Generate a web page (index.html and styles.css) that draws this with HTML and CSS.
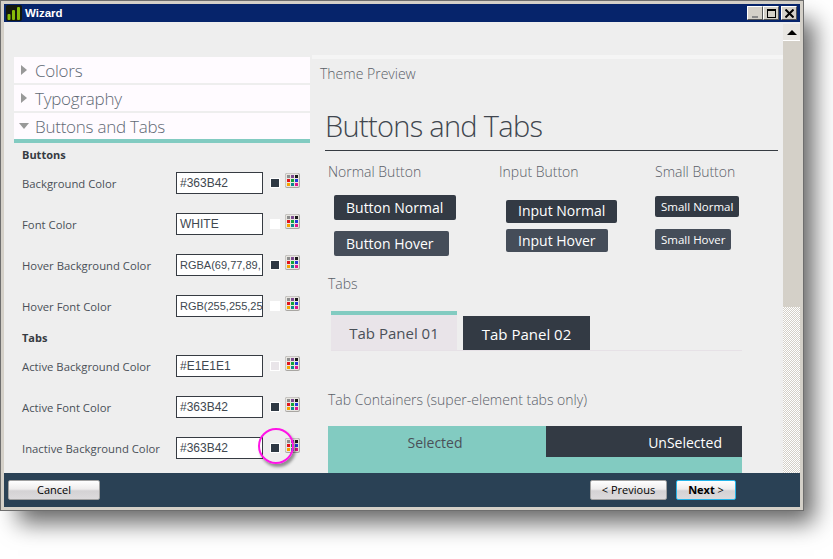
FILE: index.html
```html
<!DOCTYPE html>
<html lang="en">
<head>
  <meta charset="UTF-8" />
  <title>Wizard</title>
  <link rel="stylesheet" href="styles.css">
</head>
<body>
  <svg class="defs" width="0" height="0">
    <symbol id="palette" viewBox="0 0 15 15">
      <rect x="0" y="0" width="15" height="15" rx="2" fill="#a8a6a2"/>
      <rect x="0.5" y="0.5" width="13.5" height="13.5" rx="1.5" fill="#e8e6e1"/>
      <rect x="2" y="2" width="3" height="3" fill="#8e8e8e"/><rect x="6" y="2" width="3" height="3" fill="#7b4a8e"/><rect x="10" y="2" width="3" height="3" fill="#1a1a1a"/>
      <rect x="2" y="6" width="3" height="3" fill="#e2141c"/><rect x="6" y="6" width="3" height="3" fill="#12a538"/><rect x="10" y="6" width="3" height="3" fill="#2438d8"/>
      <rect x="2" y="10" width="3" height="3" fill="#f5a400"/><rect x="6" y="10" width="3" height="3" fill="#0d8a8a"/><rect x="10" y="10" width="3" height="3" fill="#e0148c"/>
    </symbol>
  </svg>

  <div class="window">
    <div class="title-bar">
      <svg class="app-icon" width="16" height="16" viewBox="0 0 16 16">
        <rect width="16" height="16" rx="2" fill="#14180c"/>
        <rect x="1.5" y="9" width="3" height="6" rx="1" fill="#86bc0a"/>
        <rect x="6" y="5" width="3" height="10" rx="1" fill="#86bc0a"/>
        <rect x="11" y="2" width="3" height="13" rx="1" fill="#86bc0a"/>
      </svg>
      <span class="title-text">Wizard</span>
      <div class="win-buttons">
        <div class="win-btn"><span class="win-min"></span></div>
        <div class="win-btn"><span class="win-max"></span></div>
        <div class="win-btn win-close">
          <svg width="9" height="9" viewBox="0 0 9 9"><path d="M0.5 0.5 L8.5 8.5 M8.5 0.5 L0.5 8.5" stroke="#000" stroke-width="2"/></svg>
        </div>
      </div>
    </div>

    <div class="main">
      <div class="left-panel">
        <div class="acc-item"><span class="arrow-right"></span><span class="acc-text">Colors</span></div>
        <div class="acc-item"><span class="arrow-right"></span><span class="acc-text">Typography</span></div>
        <div class="acc-item acc-open"><span class="arrow-down"></span><span class="acc-text">Buttons and Tabs</span></div>

        <div class="group-title">Buttons</div>
        <div class="color-row">
          <label>Background Color</label>
          <div class="color-input">#363B42</div>
          <span class="swatch swatch-dark"></span>
          <svg class="palette"><use href="#palette"/></svg>
        </div>
        <div class="color-row">
          <label>Font Color</label>
          <div class="color-input">WHITE</div>
          <span class="swatch swatch-white"></span>
          <svg class="palette"><use href="#palette"/></svg>
        </div>
        <div class="color-row">
          <label>Hover Background Color</label>
          <div class="color-input color-input-long">RGBA(69,77,89,</div>
          <span class="swatch swatch-dark"></span>
          <svg class="palette"><use href="#palette"/></svg>
        </div>
        <div class="color-row">
          <label>Hover Font Color</label>
          <div class="color-input color-input-long">RGB(255,255,25</div>
          <span class="swatch swatch-white"></span>
          <svg class="palette"><use href="#palette"/></svg>
        </div>

        <div class="group-title group-tabs">Tabs</div>
        <div class="color-row">
          <label>Active Background Color</label>
          <div class="color-input">#E1E1E1</div>
          <span class="swatch swatch-light"></span>
          <svg class="palette"><use href="#palette"/></svg>
        </div>
        <div class="color-row">
          <label>Active Font Color</label>
          <div class="color-input">#363B42</div>
          <span class="swatch swatch-dark"></span>
          <svg class="palette"><use href="#palette"/></svg>
        </div>
        <div class="color-row">
          <label>Inactive Background Color</label>
          <div class="color-input">#363B42</div>
          <span class="swatch swatch-dark"></span>
          <svg class="palette"><use href="#palette"/></svg>
          <span class="highlight"></span>
        </div>
      </div>

      <div class="preview">
        <div class="preview-label">Theme Preview</div>
        <h1 class="preview-title">Buttons and Tabs</h1>

        <div class="button-columns">
          <div class="col col-normal">
            <div class="col-title">Normal Button</div>
            <div class="btn btn-big">Button Normal</div>
            <div class="btn btn-big btn-hover btn-second">Button Hover</div>
          </div>
          <div class="col col-input">
            <div class="col-title">Input Button</div>
            <div class="btn btn-mid">Input Normal</div>
            <div class="btn btn-mid btn-hover btn-second-mid">Input Hover</div>
          </div>
          <div class="col col-small">
            <div class="col-title">Small Button</div>
            <div class="btn btn-small">Small Normal</div>
            <div class="btn btn-small btn-hover btn-second-small">Small Hover</div>
          </div>
        </div>

        <div class="col-title tabs-title">Tabs</div>
        <div class="tab-strip">
          <div class="tab tab-active">Tab Panel 01</div>
          <div class="tab tab-inactive">Tab Panel 02</div>
        </div>

        <div class="col-title containers-title">Tab Containers (super-element tabs only)</div>
        <div class="tab-container">
          <div class="tc-tabs">
            <div class="tc-selected">Selected</div>
            <div class="tc-unselected">UnSelected</div>
          </div>
        </div>
      </div>

      <div class="scrollbar">
        <div class="scroll-up"><span class="scroll-arrow"></span></div>
        <div class="scroll-thumb"></div>
        <div class="scroll-track"></div>
      </div>
    </div>

    <div class="footer">
      <div class="dlg-btn btn-cancel">Cancel</div>
      <div class="footer-right">
        <div class="dlg-btn btn-prev">&lt; Previous</div>
        <div class="dlg-btn btn-next"><b>Next</b> &gt;</div>
      </div>
    </div>
  </div>
</body>
</html>
```

FILE: styles.css
```css
body {
  margin: 0;
  width: 833px;
  height: 559px;
  background: #ffffff;
  overflow: hidden;
  font-family: "Open Sans", "Noto Sans", sans-serif;
}

.defs {
  display: block;
  height: 0;
}

.window {
  width: 796px;
  height: 503px;
  box-sizing: content-box;
  border: 4px solid #d4d0c8;
  outline: 1px solid #6e6e6e;
  outline-offset: -1px;
  box-shadow: 14px 16px 22px -4px rgba(0, 0, 0, 0.6);
  display: flex;
  flex-direction: column;
  background: #eeeeee;
}

.title-bar {
  height: 18px;
  background: #06246b;
  display: flex;
  align-items: center;
  padding: 0 3px 0 2px;
  flex: none;
}

.app-icon {
  flex: none;
}

.title-text {
  color: #ffffff;
  font: bold 11.5px "Liberation Sans", sans-serif;
  margin-left: 3px;
  flex: 1;
}

.win-buttons {
  display: flex;
}

.win-btn {
  width: 14px;
  height: 12px;
  background: #d4d0c8;
  border: 1px solid;
  border-color: #ffffff #555555 #555555 #ffffff;
  display: flex;
  align-items: center;
  justify-content: center;
}

.win-close {
  margin-left: 2px;
}

.win-min {
  width: 6px;
  height: 2px;
  background: #8a8a8a;
  margin-top: 7px;
}

.win-max {
  width: 7px;
  height: 6px;
  border: 1px solid #000;
  border-top-width: 2px;
}

.main {
  flex: 1;
  display: flex;
  min-height: 0;
}

.left-panel {
  width: 296px;
  padding: 35px 0 0 10px;
  flex: none;
  overflow: hidden;
}

.acc-item {
  height: 26px;
  margin-bottom: 2px;
  background: #fffbff;
  color: #5f6a75;
  font-size: 17px;
  font-weight: 300;
  letter-spacing: -0.25px;
  display: flex;
  align-items: center;
  padding-left: 7px;
}

.acc-text {
  margin-top: 1px;
}

.acc-open {
  border-bottom: 4px solid #82cbc1;
  margin-bottom: 0;
}

.arrow-right {
  width: 0;
  height: 0;
  border-left: 6px solid #999999;
  border-top: 5px solid transparent;
  border-bottom: 5px solid transparent;
  margin-right: 8px;
}

.arrow-down {
  width: 0;
  height: 0;
  border-top: 6px solid #999999;
  border-left: 5px solid transparent;
  border-right: 5px solid transparent;
  margin: 0 6px 0 -2px;
}

.group-title {
  font-size: 11px;
  font-weight: 700;
  color: #363b42;
  padding: 4px 0 0 8px;
  height: 18px;
}

.group-tabs {
  height: 14px;
  margin-top: -9px;
  margin-bottom: 10px;
  padding-top: 4px;
}

.color-row {
  position: relative;
  display: flex;
  align-items: center;
  height: 24px;
  margin: 6px 0 17px 8px;
  font-size: 11.3px;
  color: #4a5058;
}

.color-row:last-child {
  margin-bottom: 0;
}

.color-row label {
  width: 154px;
  flex: none;
  padding-top: 1px;
  white-space: nowrap;
}

.color-input {
  width: 82px;
  height: 20px;
  border: 1px solid #363b42;
  background: #ffffff;
  flex: none;
  font: 12px/20px "Liberation Sans", sans-serif;
  color: #404850;
  padding-left: 3px;
  overflow: hidden;
  white-space: nowrap;
}

.color-input-long {
  font-size: 11px;
}

.swatch {
  width: 8px;
  height: 8px;
  border: 1px solid #ffffff;
  margin: 0 5px 0 7px;
  flex: none;
}

.swatch-dark { background: #2f3944; }
.swatch-white { background: #ffffff; }
.swatch-light { background: #e9e5e9; }

.palette {
  width: 15px;
  height: 15px;
  flex: none;
  margin-top: -5px;
}

.highlight {
  position: absolute;
  left: 236px;
  top: -8px;
  width: 32px;
  height: 32px;
  border: 2px solid #ff14e6;
  border-radius: 50%;
  box-shadow: 2px 3px 3px rgba(0, 0, 0, 0.4);
}

.preview {
  flex: 1;
  min-width: 0;
  margin: 33px 0 0 2px;
  border-top: 4px solid #f5f5f5;
  padding-left: 8px;
  overflow: hidden;
}

.preview-label {
  font-size: 14px;
  font-weight: 300;
  color: #5a6068;
  margin-top: 6px;
  line-height: 18px;
}

.preview-title {
  font-size: 29px;
  font-weight: 300;
  letter-spacing: -0.7px;
  color: #40464e;
  margin: 23px 5px 0 5px;
  line-height: 39px;
  height: 39px;
  padding-bottom: 5px;
  border-bottom: 1px solid #363b42;
}

.button-columns {
  display: flex;
  margin-top: 11px;
  padding-left: 8px;
  height: 110px;
}

.col-normal { width: 171px; }
.col-input { width: 156px; }

.col-title {
  font-size: 14px;
  font-weight: 300;
  color: #5a6068;
  line-height: 20px;
}

.btn {
  display: table;
  background: #333a44;
  color: #ffffff;
  border-radius: 2px;
  font-size: 14px;
}

.btn-hover { background: #454d59; }

.btn-big {
  margin: 13px 0 0 6px;
  height: 25px;
  line-height: 25px;
  padding: 0 13px 0 12px;
}

.btn-big.btn-second {
  margin-top: 11px;
  padding-right: 15px;
}

.btn-mid {
  margin: 18px 0 0 7px;
  height: 23px;
  line-height: 22px;
  padding: 0 12px;
}

.btn-mid.btn-second-mid {
  margin-top: 6px;
  line-height: 23px;
}

.btn-small {
  margin-top: 14px;
  height: 21px;
  line-height: 21px;
  padding: 0 6px;
  font-size: 11.5px;
}

.btn-small.btn-second-small { margin-top: 12px; }

.tabs-title {
  margin: 2px 0 0 8px;
}

.tab-strip {
  display: flex;
  align-items: flex-end;
  margin: 17px 41px 0 11px;
  border-bottom: 1px solid #e6e1e6;
  height: 39px;
}

.tab {
  font-size: 15px;
  text-align: center;
}

.tab-active {
  width: 126px;
  height: 35px;
  line-height: 37px;
  background: #e9e4e9;
  border-top: 4px solid #82cbc1;
  color: #4a5058;
}

.tab-inactive {
  width: 127px;
  height: 34px;
  line-height: 36px;
  margin-left: 6px;
  background: #333a44;
  color: #ffffff;
}

.containers-title {
  margin: 39px 0 0 8px;
}

.tab-container {
  margin: 16px 41px 0 8px;
  background: #82cbc1;
  height: 47px;
}

.tc-tabs {
  display: flex;
  height: 31px;
  line-height: 33px;
  font-size: 14px;
}

.tc-selected {
  width: 218px;
  text-align: center;
  color: #4a5058;
  padding-right: 4px;
  box-sizing: border-box;
}

.tc-unselected {
  flex: 1;
  background: #333a44;
  color: #ffffff;
  text-align: right;
  padding-right: 20px;
}

.scrollbar {
  width: 17px;
  flex: none;
  display: flex;
  flex-direction: column;
  margin-top: 2px;
}

.scroll-up {
  height: 16px;
  background: #e8e6e2;
  border-bottom: 1px solid #ffffff;
  display: flex;
  align-items: center;
  justify-content: center;
}

.scroll-arrow {
  width: 0;
  height: 0;
  border-bottom: 5px solid #000;
  border-left: 5px solid transparent;
  border-right: 5px solid transparent;
}

.scroll-thumb {
  height: 266px;
  background: #d4d0c8;
}

.scroll-track {
  flex: 1;
  background: repeating-conic-gradient(#d4d0c8 0 25%, #ffffff 0 50%) 0 0 / 2px 2px;
}

.footer {
  height: 34px;
  flex: none;
  background: #2a4155;
  display: flex;
  align-items: center;
  justify-content: space-between;
  padding: 0 64px 0 4px;
}

.footer-right {
  display: flex;
  gap: 9px;
}

.dlg-btn {
  height: 18px;
  border: 1px solid #a0a0a0;
  border-radius: 2px;
  background: linear-gradient(#ffffff, #eeecec 45%, #d4d2d4 55%, #dcdadc);
  font: 11px/18px "Open Sans", sans-serif;
  color: #000000;
  text-align: center;
}

.btn-cancel { width: 90px; }
.btn-prev { width: 75px; }

.btn-next {
  width: 58px;
  border-color: #26b4e8;
}
```
